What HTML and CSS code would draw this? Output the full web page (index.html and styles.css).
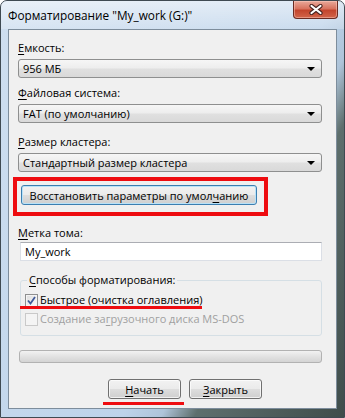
FILE: index.html
```html
<!DOCTYPE html>
<html>
  <head>
    <meta charset="UTF-8" />
    <title>Форматирование</title>
    <link rel="stylesheet" href="styles.css">
  </head>
  <body>
    <div class="window">
      <div class="title-bar">
        <div class="title-bar-text">Форматирование "My_work (G:)"</div>
        <div class="close-btn">
          <svg width="14" height="11" viewBox="0 0 14 11">
            <path d="M2.5 2 L11.5 9 M11.5 2 L2.5 9" stroke="#4a2420" stroke-width="4.2" stroke-linecap="round" fill="none" />
            <path d="M2.5 2 L11.5 9 M11.5 2 L2.5 9" stroke="#fff" stroke-width="2.2" stroke-linecap="round" fill="none" />
          </svg>
        </div>
      </div>

      <div class="client">
        <div class="field-label first"><u>Е</u>мкость:</div>
        <div class="combo">
          <span>956 МБ</span>
          <span class="arrow"></span>
        </div>

        <div class="field-label"><u>Ф</u>айловая система:</div>
        <div class="combo">
          <span>FAT (по умолчанию)</span>
          <span class="arrow"></span>
        </div>

        <div class="field-label cluster-label"><u>Р</u>азмер кластера:</div>
        <div class="combo">
          <span>Стандартный размер кластера</span>
          <span class="arrow"></span>
        </div>

        <div class="highlight">
          <button class="btn restore-btn">Восстановить параметры по умол<u>ч</u>анию</button>
        </div>

        <div class="field-label volume-label"><u>М</u>етка тома:</div>
        <div class="textbox">My_work</div>

        <fieldset class="group">
          <legend><u>С</u>пособы форматирования:</legend>
          <div class="check-row">
            <span class="checkbox checked">
              <svg width="9" height="9" viewBox="0 0 9 9">
                <path d="M1 4.5 L3.5 7.5 L8 1" stroke="#3f5a9a" stroke-width="1.8" fill="none" />
              </svg>
            </span>
            <span><u>Б</u>ыстрое (очистка оглавления)</span>
            <span class="underline-mark quick-mark"></span>
          </div>
          <div class="check-row disabled">
            <span class="checkbox"></span>
            <span>Создание за<u>г</u>рузочного диска MS-DOS</span>
          </div>
        </fieldset>

        <div class="progress"></div>

        <div class="actions">
          <div class="action-wrap">
            <button class="btn action-btn"><u>Н</u>ачать</button>
            <span class="underline-mark start-mark"></span>
          </div>
          <button class="btn action-btn"><u>З</u>акрыть</button>
        </div>
      </div>
    </div>
  </body>
</html>
```

FILE: styles.css
```css
body {
  margin: 0;
  padding: 0;
  font-family: "Open Sans", "Noto Sans", Arial, sans-serif;
  font-size: 11px;
  color: #000;
  background-color: #fff;
}
u {
  text-decoration: underline;
  text-underline-offset: 2px;
}
.window {
  width: 345px;
  height: 418px;
  box-sizing: border-box;
  display: flex;
  flex-direction: column;
  border: 1px solid #3f4a52;
  border-radius: 7px 7px 0 0;
  background: linear-gradient(117deg, #cfdff0 0%, #bdd3ea 60%, #aec4d9 67%, #5e6f6d 73%, #3f4d4b 100%);
  overflow: hidden;
}
.title-bar {
  height: 28px;
  display: flex;
  justify-content: space-between;
  align-items: flex-start;
  background: linear-gradient(to bottom, rgba(255, 255, 255, 0.55), rgba(255, 255, 255, 0.2));
}
.title-bar-text {
  margin-left: 7px;
  line-height: 28px;
  font-size: 11.8px;
  color: #000;
}
.close-btn {
  width: 45px;
  height: 18px;
  margin-right: 6px;
  box-sizing: border-box;
  display: flex;
  justify-content: center;
  align-items: center;
  border: 1px solid #6a2b22;
  border-top: none;
  border-radius: 0 0 4px 4px;
  background: linear-gradient(to bottom, #e9a99a 0%, #d8735f 45%, #c3452d 55%, #d2654a 100%);
  box-shadow: inset 0 0 0 1px rgba(255, 210, 200, 0.45);
}
.client {
  flex: 1;
  margin: 0 7px 8px 7px;
  border: 1px solid #7d8d9c;
  background-color: #f0f0f0;
  padding: 0 14px 0 9px;
  display: flex;
  flex-direction: column;
  align-items: stretch;
}
.field-label {
  line-height: 16px;
  margin-top: 7px;
}
.field-label.first {
  margin-top: 10px;
}
.field-label.cluster-label {
  margin-top: 11px;
}
.combo {
  height: 19px;
  margin-top: 3px;
  box-sizing: border-box;
  display: flex;
  align-items: center;
  justify-content: space-between;
  padding: 0 6px 0 4px;
  border: 1px solid #8e8f8f;
  border-radius: 3px;
  background: linear-gradient(to bottom, #f6f6f6 0%, #ededed 48%, #e0e0e0 52%, #d9d9d9 100%);
}
.arrow {
  width: 0;
  height: 0;
  border-left: 4px solid transparent;
  border-right: 4px solid transparent;
  border-top: 4px solid #000;
}
.btn {
  font-family: inherit;
  font-size: 11px;
  color: #000;
  height: 20px;
  padding: 0;
  box-sizing: border-box;
  white-space: nowrap;
  border: 1px solid #707070;
  border-radius: 3px;
  background: linear-gradient(to bottom, #f2f2f2 0%, #ebebeb 48%, #dddddd 52%, #cfcfcf 100%);
  box-shadow: inset 0 0 0 1px rgba(255, 255, 255, 0.7);
}
.highlight {
  align-self: flex-start;
  margin: 5px 0 0 -5px;
  padding: 4px 7px 7px 4px;
  border: 4px solid #ee0c10;
}
.restore-btn {
  width: 236px;
  display: block;
  border-color: #3c7fb1;
  box-shadow: inset 0 0 0 1px #b9e2f8;
}
.volume-label {
  margin-top: 9px;
}
.textbox {
  height: 19px;
  margin: 1px 0 0 2px;
  box-sizing: border-box;
  padding: 0 4px;
  line-height: 17px;
  background-color: #fff;
  border: 1px solid #dbdfe6;
  border-top-color: #abadb3;
}
.group {
  margin: 11px 0 0 2px;
  padding: 1px 8px 8px 4px;
  border: 1px solid #d5dfe5;
  border-radius: 3px;
  min-width: 0;
}
.group legend {
  padding: 0 2px;
  margin-left: 2px;
  line-height: 16px;
}
.check-row {
  position: relative;
  display: flex;
  align-items: center;
  gap: 2px;
  line-height: 16px;
  margin-top: 3px;
}
.check-row.disabled {
  color: #a0a0a0;
}
.checkbox {
  width: 13px;
  height: 13px;
  box-sizing: border-box;
  display: flex;
  justify-content: center;
  align-items: center;
  border: 1px solid #8e8f8f;
  background: linear-gradient(135deg, #dcdcdc, #fbfbfb);
  box-shadow: inset 0 0 0 1px #f4f4f4;
}
.check-row.disabled .checkbox {
  border-color: #c9c9c9;
  background: #f4f4f4;
}
.underline-mark {
  position: absolute;
  height: 3px;
  background-color: #ee0c10;
}
.quick-mark {
  left: -5px;
  width: 182px;
  top: 14px;
}
.progress {
  height: 13px;
  margin: 14px 0 0 1px;
  box-sizing: border-box;
  border: 1px solid #b2b2b2;
  border-radius: 3px;
  background: linear-gradient(to bottom, #f2f2f2 0%, #e2e2e2 50%, #d4d4d4 100%);
}
.actions {
  display: flex;
  gap: 8px;
  margin: 16px 0 0 0;
  padding-left: 90px;
}
.action-wrap {
  position: relative;
}
.action-btn {
  width: 73px;
  display: block;
}
.start-mark {
  left: -5px;
  width: 81px;
  top: 23px;
}
```
